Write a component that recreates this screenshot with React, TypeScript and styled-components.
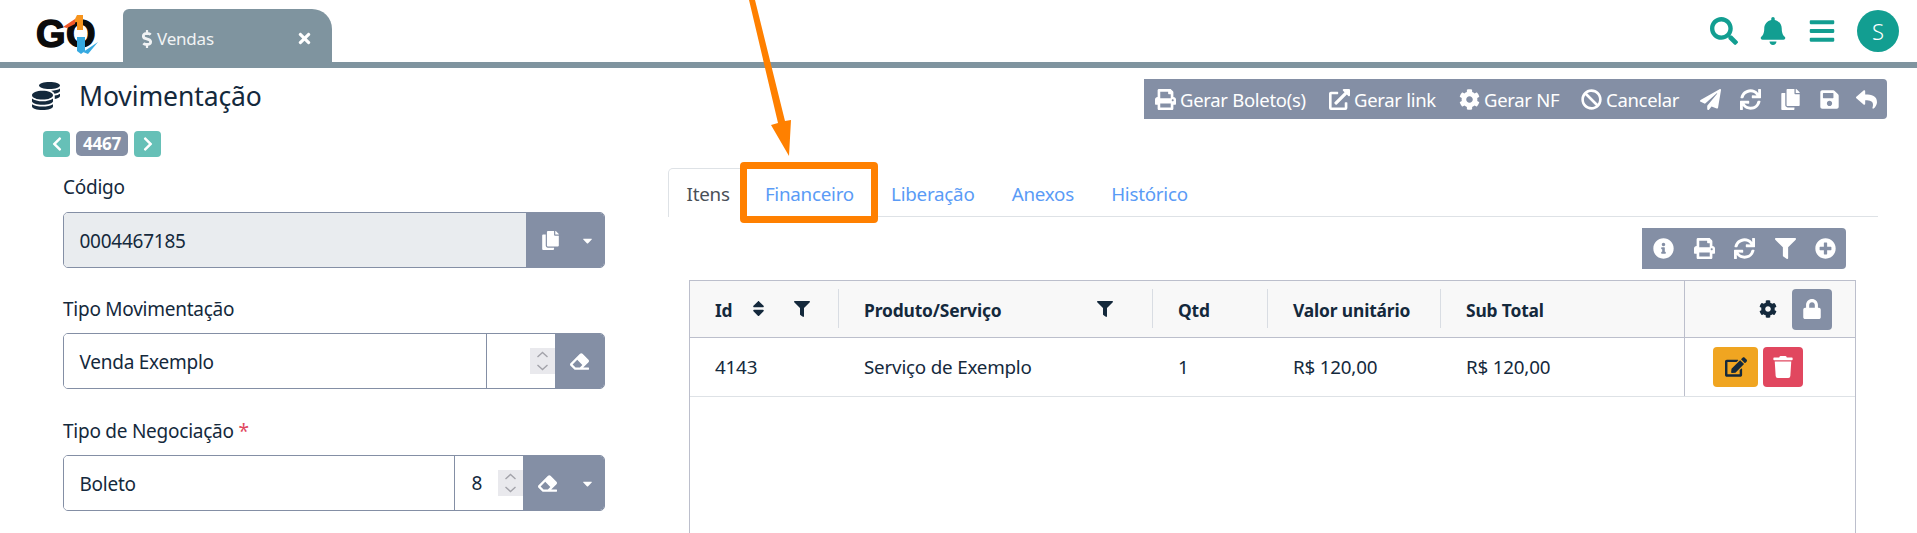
import React from "react";
import styled, { createGlobalStyle } from "styled-components";
import {
  FaBan, FaBars, FaBell, FaCaretDown, FaChevronLeft, FaChevronRight, FaCoins, FaCog, FaCopy, FaDollarSign,
  FaEdit, FaEraser, FaExternalLinkAlt, FaFilter, FaInfoCircle, FaLock, FaPaperPlane, FaPlusCircle, FaPrint,
  FaReply, FaSave, FaSearch, FaSort, FaSync, FaTimes, FaTrash,
} from "react-icons/fa";

const Global = createGlobalStyle`
  html, body { margin: 0; padding: 0; background: #fff; }
  body { font-family: "Noto Sans", "Open Sans", sans-serif; color: #14293c; }
  * { box-sizing: border-box; }
`;

const Page = styled.div`
  position: relative;
  width: 1917px;
  height: 533px;
  overflow: hidden;
  background: #fff;
`;

const TopBar = styled.header`
  height: 68px;
  border-bottom: 6px solid #7f949f;
  display: flex;
  align-items: flex-end;
  padding-left: 36px;
`;

const Logo = styled.div`
  position: relative;
  width: 62px;
  height: 40px;
  margin-bottom: 8px;
  margin-right: 25px;
  display: flex;
  align-items: center;
`;

const LogoLetters = styled.span`
  font-family: "Liberation Sans", sans-serif;
  font-weight: 700;
  font-size: 38px;
  letter-spacing: 0.5px;
  color: #0b0b0b;
  -webkit-text-stroke: 1.4px #0b0b0b;
  line-height: 40px;
`;

const LogoMark = styled.svg`
  position: absolute;
  left: 0;
  top: 0;
`;

const Tab = styled.div`
  width: 209px;
  height: 53px;
  background: #7f949f;
  border-radius: 6px 20px 0 0;
  color: #f1f3f4;
  display: flex;
  align-items: center;
  font-size: 17px;
  letter-spacing: -0.2px;
  padding: 6px 19px 0 15px;
  gap: 1px;
  svg { font-size: 18px; }
`;

const TabClose = styled.span`
  margin-left: auto;
  display: flex;
  color: #fff;
  svg { font-size: 17px; }
`;

const TopIcons = styled.div`
  margin-left: auto;
  align-self: flex-start;
  padding: 9px 18px 9px 0;
  height: 62px;
  display: flex;
  color: #129e91;
  align-items: center;
  gap: 21px;
  font-size: 28px;
  svg { display: block; }
`;

const Avatar = styled.div`
  width: 42px;
  height: 42px;
  border-radius: 50%;
  background: #129e91;
  color: #fff;
  font-size: 22px;
  font-weight: 300;
  display: flex;
  align-items: center;
  justify-content: center;
`;

const TitleRow = styled.div`
  display: flex;
  align-items: flex-start;
  justify-content: space-between;
  padding: 11px 30px 0 32px;
  height: 62px;
`;

const Title = styled.h1`
  margin: -1px 0 0;
  display: flex;
  align-items: center;
  gap: 19px;
  font-weight: 400;
  font-size: 26.5px;
  line-height: 36px;
  color: #14293c;
  letter-spacing: -0.1px;
  svg { font-size: 28px; }
`;

const ActionBar = styled.div`
  height: 40px;
  width: 743px;
  background: #848fa5;
  border-radius: 0 4px 4px 0;
  color: #fff;
  display: flex;
  align-items: center;
  padding-left: 11px;
`;

const Action = styled.span<{ $w: number }>`
  display: flex;
  align-items: center;
  gap: 4px;
  font-size: 18.5px;
  letter-spacing: -0.3px;
  width: ${(p) => p.$w}px;
  white-space: nowrap;
  svg { font-size: 21px; flex: none; }
`;

const Pager = styled.div`
  display: flex;
  align-items: center;
  gap: 6px;
  padding-left: 43px;
  height: 26px;
  margin-top: 1px;
`;

const PagerBtn = styled.span`
  width: 27px;
  height: 26px;
  border-radius: 4px;
  background: #66c0b7;
  color: #fff;
  display: flex;
  align-items: center;
  justify-content: center;
  font-size: 16px;
`;

const PagerNum = styled.span`
  width: 52px;
  height: 25px;
  border-radius: 5px;
  background: #848fa5;
  color: #fff;
  font-weight: 700;
  font-size: 17px;
  letter-spacing: -0.2px;
  display: flex;
  align-items: center;
  justify-content: center;
  margin-top: -1px;
`;

const Main = styled.div`
  display: grid;
  grid-template-columns: 542px 1fr;
  column-gap: 63px;
  padding: 11px 39px 0 63px;
`;

const Form = styled.div`
  display: flex;
  flex-direction: column;
  gap: 28px;
  padding-top: 6px;
`;

const Field = styled.div<{ $shift?: number; $gap?: number }>`
  display: flex;
  flex-direction: column;
  gap: ${(p) => p.$gap ?? 11}px;
  margin-top: ${(p) => p.$shift ?? 0}px;
`;

const Label = styled.label`
  font-size: 19px;
  line-height: 26px;
  color: #14293c;
  letter-spacing: -0.25px;
`;

const Required = styled.span`
  color: #e1475f;
`;

const InputGroup = styled.div`
  display: flex;
  height: 56px;
  border-radius: 5px;
  border: 1px solid #848fa5;
  overflow: hidden;
  font-size: 19px;
  letter-spacing: -0.25px;
  color: #14293c;
`;

const InputText = styled.div<{ $disabled?: boolean }>`
  flex: 1;
  display: flex;
  align-items: center;
  padding: 1px 0 0 15.5px;
  background: ${(p) => (p.$disabled ? "#e9ecef" : "#fff")};
`;

const NumberBox = styled.div`
  width: 69px;
  border-left: 1px solid #848fa5;
  display: flex;
  align-items: center;
  justify-content: flex-end;
`;

const NumberValue = styled.span`
  margin-right: 16px;
`;

const Spinner = styled.svg`
  width: 25px;
  height: 26px;
  background: #e9e9ed;
  display: block;
`;

const Append = styled.div<{ $width: number }>`
  width: ${(p) => p.$width}px;
  background: #848fa5;
  color: #fff;
  display: flex;
  align-items: center;
  padding-left: 15px;
  margin: -1px -1px -1px 0;
  font-size: 19px;
  svg { display: block; }
`;

const AppendCaret = styled.span`
  margin-left: auto;
  margin-right: 10px;
  display: flex;
  font-size: 15px;
`;

const Right = styled.section`
  display: flex;
  flex-direction: column;
`;

const Tabs = styled.nav`
  display: flex;
  height: 49px;
  border-bottom: 1px solid #dee2e6;
  font-size: 18.8px;
  letter-spacing: -0.25px;
`;

const TabLink = styled.span<{ $active?: boolean }>`
  display: flex;
  align-items: center;
  padding: 2px 17.6px 0;
  height: ${(p) => (p.$active ? "49px" : "48px")};
  color: ${(p) => (p.$active ? "#495057" : "#5a9bf6")};
  background: #fff;
  border: 1px solid ${(p) => (p.$active ? "#dee2e6" : "transparent")};
  border-bottom: 0;
  border-radius: 5px 5px 0 0;
  margin-right: ${(p) => (p.$active ? "-2px" : "0")};
`;

const ToolRow = styled.div`
  display: flex;
  justify-content: flex-end;
  padding-right: 32px;
  margin-top: 11px;
`;

const ToolBar = styled.div`
  width: 204px;
  height: 41px;
  background: #848fa5;
  border-radius: 0 4px 4px 0;
  color: #fff;
  display: flex;
  align-items: center;
  justify-content: space-between;
  padding: 0 10px 0 11px;
  font-size: 21px;
  svg { display: block; }
`;

const Table = styled.div`
  margin: 11px 22px 0 21px;
  height: 300px;
  border: 1px solid #bcbfcc;
  border-bottom: 0;
`;

const cols = "149px 314px 115px 173px 243px 1fr";

const HeadRow = styled.div`
  display: grid;
  grid-template-columns: ${cols};
  height: 57px;
  background: #f8f8f8;
  border-bottom: 1px solid #bcbfcc;
  align-items: center;
  font-weight: 700;
  font-size: 17.4px;
  color: #14293c;
`;

const HeadCell = styled.div<{ $sep?: boolean }>`
  display: flex;
  align-items: center;
  height: 39px;
  margin-top: -1px;
  padding: 2px 0 0 25px;
  border-right: 1px solid ${(p) => (p.$sep ? "#d9dde3" : "transparent")};
  letter-spacing: -0.15px;
  white-space: nowrap;
`;

const HeadIcon = styled.span<{ $left: number; $size?: number }>`
  margin-left: ${(p) => p.$left}px;
  margin-top: -2px;
  display: flex;
  font-size: ${(p) => p.$size ?? 16}px;
`;

const ActionHead = styled.div`
  height: 56px;
  border-left: 1px solid #bcbfcc;
  display: flex;
  align-items: center;
  justify-content: flex-end;
  padding-right: 23px;
  gap: 15px;
  font-size: 18px;
`;

const LockBtn = styled.span`
  width: 40px;
  height: 41px;
  background: #848fa5;
  border-radius: 4px;
  color: #fff;
  display: flex;
  align-items: center;
  justify-content: center;
  font-size: 20px;
`;

const BodyRow = styled.div`
  display: grid;
  grid-template-columns: ${cols};
  height: 59px;
  border-bottom: 1px solid #dee2e6;
  align-items: center;
  font-size: 18.8px;
  letter-spacing: -0.2px;
  color: #14293c;
`;

const BodyCell = styled.div`
  padding-left: 25px;
`;

const RowActions = styled.div`
  height: 58px;
  border-left: 1px solid #bcbfcc;
  display: flex;
  align-items: center;
  padding-left: 28px;
  gap: 5px;
  padding-bottom: 1px;
`;

const RowBtn = styled.span<{ $bg: string; $fg: string; $w: number }>`
  width: ${(p) => p.$w}px;
  height: 40px;
  background: ${(p) => p.$bg};
  color: ${(p) => p.$fg};
  border-radius: 4px;
  display: flex;
  align-items: center;
  justify-content: center;
  font-size: 22px;
`;

const Highlight = styled.div`
  position: absolute;
  left: 740px;
  top: 162px;
  width: 138px;
  height: 61px;
  border: 7px solid #ff8000;
  border-radius: 4px;
`;

const Arrow = styled.svg`
  position: absolute;
  left: 740px;
  top: 0;
`;

const SpinnerGlyph = () => (
  <Spinner viewBox="0 0 25 26">
    <path d="M7.5 9l5-4.5 5 4.5M7.5 17l5 4.5 5-4.5" fill="none" stroke="#a3a3aa" strokeWidth="1.4" />
  </Spinner>
);

export default function App() {
  return (
    <Page>
      <Global />
      <TopBar>
        <Logo>
          <LogoLetters>GO</LogoLetters>
          <LogoMark width="62" height="40" viewBox="0 0 62 40">
            <rect x="39" y="14" width="9" height="11" fill="#fff" />
            <path d="M27 13L39 5V10L31 14Z" fill="#f0592a" />
            <path d="M41 1h6v15h-6V8l-2 .5V5z" fill="#f7941d" />
            <path d="M41 23h8v14l-4 3-4-3z" fill="#35a9e1" />
            <path d="M47 38l15-10-10 12z" fill="#35a9e1" />
          </LogoMark>
        </Logo>
        <Tab>
          <FaDollarSign />
          <span>Vendas</span>
          <TabClose><FaTimes /></TabClose>
        </Tab>
        <TopIcons>
          <FaSearch />
          <FaBell />
          <FaBars />
          <Avatar>S</Avatar>
        </TopIcons>
      </TopBar>
      <TitleRow>
        <Title><FaCoins />Movimentação</Title>
        <ActionBar>
          <Action $w={174}><FaPrint />Gerar Boleto(s)</Action>
          <Action $w={130}><FaExternalLinkAlt />Gerar link</Action>
          <Action $w={122}><FaCog />Gerar NF</Action>
          <Action $w={119}><FaBan />Cancelar</Action>
          <Action $w={40}><FaPaperPlane /></Action>
          <Action $w={40}><FaSync /></Action>
          <Action $w={39}><FaCopy /></Action>
          <Action $w={37}><FaSave /></Action>
          <Action $w={22}><FaReply /></Action>
        </ActionBar>
      </TitleRow>
      <Pager>
        <PagerBtn><FaChevronLeft /></PagerBtn>
        <PagerNum>4467</PagerNum>
        <PagerBtn><FaChevronRight /></PagerBtn>
      </Pager>
      <Main>
        <Form>
          <Field $gap={12}>
            <Label>Código</Label>
            <InputGroup>
              <InputText $disabled>0004467185</InputText>
              <Append $width={79}><FaCopy /><AppendCaret><FaCaretDown /></AppendCaret></Append>
            </InputGroup>
          </Field>
          <Field>
            <Label>Tipo Movimentação</Label>
            <InputGroup>
              <InputText>Venda Exemplo</InputText>
              <NumberBox><SpinnerGlyph /></NumberBox>
              <Append $width={50}><FaEraser /></Append>
            </InputGroup>
          </Field>
          <Field $shift={1}>
            <Label>Tipo de Negociação <Required>*</Required></Label>
            <InputGroup>
              <InputText>Boleto</InputText>
              <NumberBox><NumberValue>8</NumberValue><SpinnerGlyph /></NumberBox>
              <Append $width={82}><FaEraser /><AppendCaret><FaCaretDown /></AppendCaret></Append>
            </InputGroup>
          </Field>
        </Form>
        <Right>
          <Tabs>
            <TabLink $active>Itens</TabLink>
            <TabLink>Financeiro</TabLink>
            <TabLink>Liberação</TabLink>
            <TabLink>Anexos</TabLink>
            <TabLink>Histórico</TabLink>
          </Tabs>
          <ToolRow>
            <ToolBar>
              <FaInfoCircle />
              <FaPrint />
              <FaSync />
              <FaFilter />
              <FaPlusCircle />
            </ToolBar>
          </ToolRow>
          <Table>
            <HeadRow>
              <HeadCell $sep>Id<HeadIcon $left={17} $size={19}><FaSort /></HeadIcon><HeadIcon $left={26}><FaFilter /></HeadIcon></HeadCell>
              <HeadCell $sep>Produto/Serviço<HeadIcon $left={96}><FaFilter /></HeadIcon></HeadCell>
              <HeadCell $sep>Qtd</HeadCell>
              <HeadCell $sep>Valor unitário</HeadCell>
              <HeadCell>Sub Total</HeadCell>
              <ActionHead><FaCog /><LockBtn><FaLock /></LockBtn></ActionHead>
            </HeadRow>
            <BodyRow>
              <BodyCell>4143</BodyCell>
              <BodyCell>Serviço de Exemplo</BodyCell>
              <BodyCell>1</BodyCell>
              <BodyCell>R$ 120,00</BodyCell>
              <BodyCell>R$ 120,00</BodyCell>
              <RowActions>
                <RowBtn $bg="#f0a521" $fg="#14293c" $w={45}><FaEdit /></RowBtn>
                <RowBtn $bg="#e1475f" $fg="#fff" $w={40}><FaTrash /></RowBtn>
              </RowActions>
            </BodyRow>
          </Table>
        </Right>
      </Main>
      <Highlight />
      <Arrow width="60" height="160" viewBox="0 0 60 160">
        <path d="M9 0L15 0L45 121L51 120L49 156L31 125L38 123Z" fill="#ff8000" />
      </Arrow>
    </Page>
  );
}
